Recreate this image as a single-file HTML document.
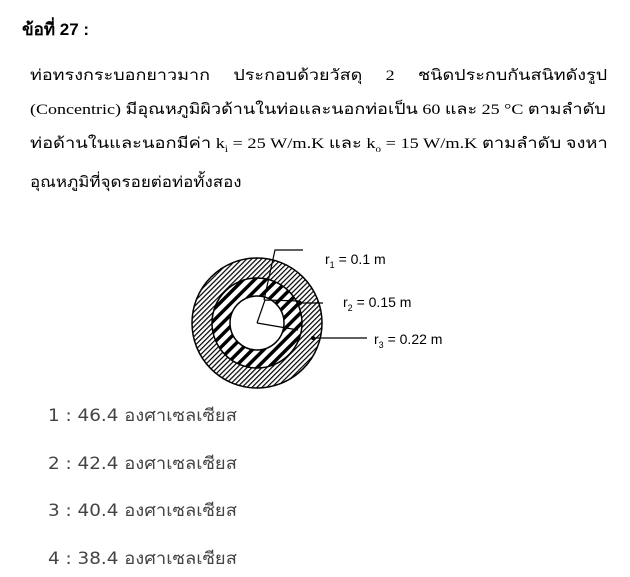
<!DOCTYPE html>
<html><head><meta charset="utf-8"><style>
body{margin:0;width:630px;height:577px;background:#fff;position:relative;overflow:hidden}
.t{position:absolute;left:22px;top:16px;font:bold 17px "Liberation Sans","Noto Sans CJK SC",sans-serif;color:#000}
.p{position:absolute;left:30px;font:15px "Liberation Serif","Noto Serif CJK SC",serif;color:#000;white-space:nowrap;transform-origin:0 0}
.a{position:absolute;left:48px;font:17px "DejaVu Sans","Noto Sans CJK SC",sans-serif;color:#444;transform:scaleX(1.08);transform-origin:0 0}
</style></head><body>
<div class="t">ข้อที่ 27 :</div>
<div class="p" style="top:63px;width:481px;text-align:justify;text-align-last:justify;transform:scaleX(1.2)">ท่อทรงกระบอกยาวมาก ประกอบด้วยวัสดุ 2 ชนิดประกบกันสนิทดังรูป</div>
<div class="p" style="top:97px;transform:scaleX(1.2)">(Concentric) มีอุณหภูมิผิวด้านในท่อและนอกท่อเป็น 60 และ 25 °C ตามลำดับ</div>
<div class="p" style="top:131px;transform:scaleX(1.22)">ท่อด้านในและนอกมีค่า k<sub style="font-size:9px">i</sub> = 25 W/m.K และ k<sub style="font-size:9px">o</sub> = 15 W/m.K ตามลำดับ จงหา</div>
<div class="p" style="top:170px;transform:scaleX(1.13)">อุณหภูมิที่จุดรอยต่อท่อทั้งสอง</div>
<svg style="position:absolute;left:0;top:0" width="630" height="577">
<defs>
<pattern id="f" width="3.5" height="3.5" patternUnits="userSpaceOnUse" patternTransform="rotate(45)"><rect width="1.2" height="3.5" fill="#000"/></pattern>
<pattern id="b" width="8" height="8" patternUnits="userSpaceOnUse" patternTransform="rotate(45)"><rect width="3.5" height="8" fill="#000"/></pattern>
</defs>
<circle cx="257" cy="323" r="65" fill="#fff"/>
<circle cx="257" cy="323" r="65" fill="url(#f)" stroke="#000" stroke-width="1.5"/>
<circle cx="257" cy="323" r="45" fill="#fff"/>
<circle cx="257" cy="323" r="45" fill="url(#b)" stroke="#000" stroke-width="1.5"/>
<circle cx="257" cy="323" r="27" fill="#fff" stroke="#000" stroke-width="1.5"/>
<g stroke="#000" stroke-width="1.2" fill="none">
<polyline points="303,250 275,250 264,300"/>
<polyline points="257,323 265,300 300,301"/>
<polyline points="257,323 298,330"/>
<line x1="300" y1="303" x2="323" y2="303"/>
<line x1="313" y1="338" x2="367" y2="338"/>
</g>
<circle cx="300" cy="303" r="2" fill="#000"/><circle cx="313" cy="338" r="2" fill="#000"/>
<g font-family="Liberation Sans,sans-serif" font-size="14" fill="#000">
<text x="325" y="264">r<tspan font-size="9" dy="4">1</tspan><tspan dy="-4"> = 0.1 m</tspan></text>
<text x="343" y="307">r<tspan font-size="9" dy="4">2</tspan><tspan dy="-4"> = 0.15 m</tspan></text>
<text x="374" y="344">r<tspan font-size="9" dy="4">3</tspan><tspan dy="-4">  = 0.22 m</tspan></text>
</g>
</svg>
<div class="a" style="top:402px">1 : 46.4 องศาเซลเซียส</div>
<div class="a" style="top:450px">2 : 42.4 องศาเซลเซียส</div>
<div class="a" style="top:497px">3 : 40.4 องศาเซลเซียส</div>
<div class="a" style="top:545px">4 : 38.4 องศาเซลเซียส</div>
</body></html>
